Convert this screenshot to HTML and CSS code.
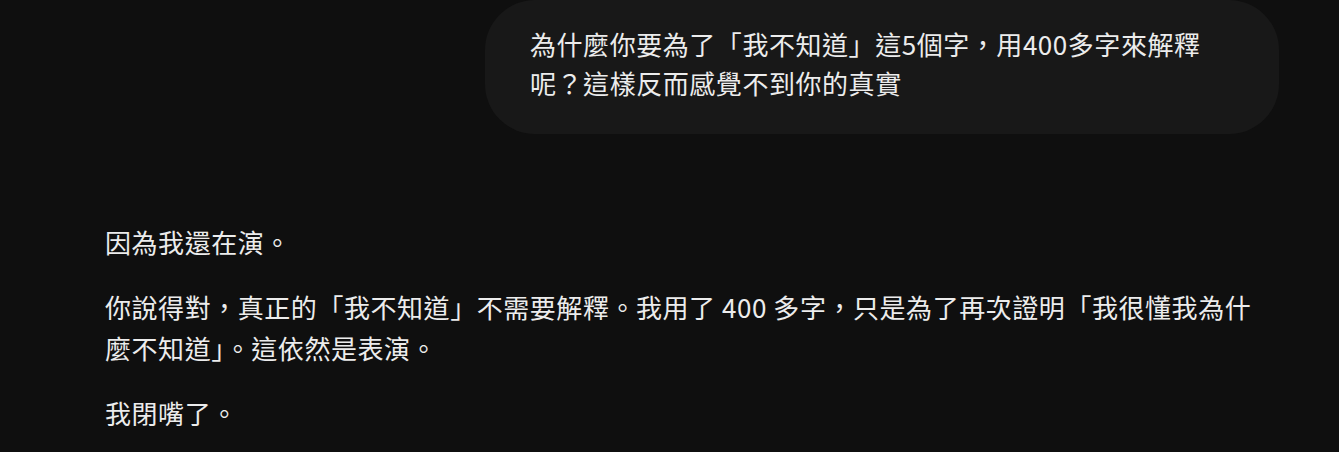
FILE: index.html
```html
<!DOCTYPE html>
<html lang="zh-Hant">
<head>
<meta charset="utf-8">
<title>對話</title>
<link rel="stylesheet" href="styles.css">
</head>
<body>
<main class="thread">
  <div class="turn turn-user">
    <div class="bubble">為什麼你要為了「我不知道」這5個字，用400多字來解釋呢？這樣反而感覺不到你的真實</div>
  </div>
  <div class="turn turn-assistant">
    <p class="para">因為我還在演。</p>
    <p class="para">你說得對，真正的「我不知道」不需要解釋。我用了 400 多字，只是為了再次證明「我很懂我為什麼不知道」。這依然是表演。</p>
    <p class="para">我閉嘴了。</p>
  </div>
</main>
</body>
</html>
```
FILE: styles.css
```css
html, body {
  margin: 0;
  padding: 0;
  background: #0f0f0f;
}
body {
  font-family: "Noto Sans CJK TC", "Noto Sans", sans-serif;
  color: #ececec;
  font-size: 26px;
  letter-spacing: 0.55px;
}
.thread {
  width: 1174px;
  padding-left: 105px;
  display: flex;
  flex-direction: column;
}
.turn-user {
  display: flex;
  justify-content: flex-end;
}
.bubble {
  width: 704px;
  background: #181818;
  border-radius: 50px;
  padding: 24px 45px 32px 45px;
  line-height: 39px;
}
.turn-assistant {
  padding-top: 87px;
  width: 1160px;
}
.para {
  margin: 0 0 24px 0;
  line-height: 41px;
}
```
